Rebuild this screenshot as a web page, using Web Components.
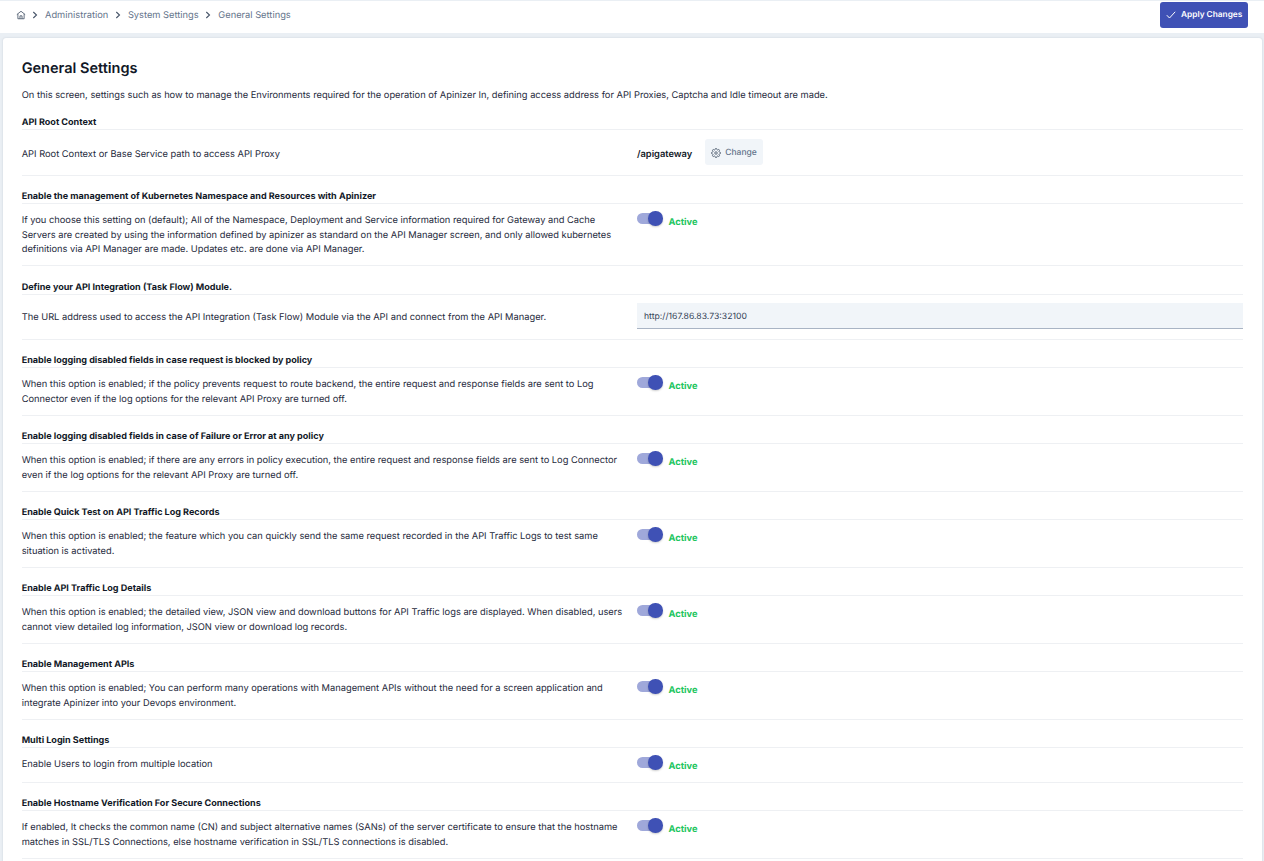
<!DOCTYPE html>
<html lang="en">
<head>
<meta charset="utf-8">
<title>General Settings</title>
<style>
  html, body { margin: 0; height: 861px; overflow: hidden; background: #eaeff4; }
  body { font-family: Inter, "Liberation Sans", sans-serif; color: #1e293b; font-size: 9.31px; text-rendering: geometricPrecision; }
</style>
</head>
<body>
<top-bar>
  <span>Administration</span>
  <span>System Settings</span>
  <span>General Settings</span>
</top-bar>
<settings-card heading="General Settings" intro="On this screen, settings such as how to manage the Environments required for the operation of Apinizer In, defining access address for API Proxies, Captcha and Idle timeout are made.">
  <setting-row heading="API Root Context" center style="--text-shift: 4px">
    API Root Context or Base Service path to access API Proxy
    <root-context slot="control" value="/apigateway"></root-context>
  </setting-row>
  <setting-row heading="Enable the management of Kubernetes Namespace and Resources with Apinizer">
    If you choose this setting on (default); All of the Namespace, Deployment and Service information required for Gateway and Cache Servers are created by using the information defined by apinizer as standard on the API Manager screen, and only allowed kubernetes definitions via API Manager are made. Updates etc. are done via API Manager.
    <active-toggle slot="control"></active-toggle>
  </setting-row>
  <setting-row heading="Define your API Integration (Task Flow) Module." center style="--text-shift: 1px">
    The URL address used to access the API Integration (Task Flow) Module via the API and connect from the API Manager.
    <url-field slot="control" value="http://167.86.83.73:32100"></url-field>
  </setting-row>
  <setting-row heading="Enable logging disabled fields in case request is blocked by policy">
    When this option is enabled; if the policy prevents request to route backend, the entire request and response fields are sent to Log Connector even if the log options for the relevant API Proxy are turned off.
    <active-toggle slot="control"></active-toggle>
  </setting-row>
  <setting-row heading="Enable logging disabled fields in case of Failure or Error at any policy">
    When this option is enabled; if there are any errors in policy execution, the entire request and response fields are sent to Log Connector even if the log options for the relevant API Proxy are turned off.
    <active-toggle slot="control"></active-toggle>
  </setting-row>
  <setting-row heading="Enable Quick Test on API Traffic Log Records">
    When this option is enabled; the feature which you can quickly send the same request recorded in the API Traffic Logs to test same situation is activated.
    <active-toggle slot="control"></active-toggle>
  </setting-row>
  <setting-row heading="Enable API Traffic Log Details">
    When this option is enabled; the detailed view, JSON view and download buttons for API Traffic logs are displayed. When disabled, users cannot view detailed log information, JSON view or download log records.
    <active-toggle slot="control"></active-toggle>
  </setting-row>
  <setting-row heading="Enable Management APIs">
    When this option is enabled; You can perform many operations with Management APIs without the need for a screen application and integrate Apinizer into your Devops environment.
    <active-toggle slot="control"></active-toggle>
  </setting-row>
  <setting-row heading="Multi Login Settings">
    Enable Users to login from multiple location
    <active-toggle slot="control"></active-toggle>
  </setting-row>
  <setting-row heading="Enable Hostname Verification For Secure Connections">
    If enabled, It checks the common name (CN) and subject alternative names (SANs) of the server certificate to ensure that the hostname matches in SSL/TLS Connections, else hostname verification in SSL/TLS connections is disabled.
    <active-toggle slot="control"></active-toggle>
  </setting-row>
</settings-card>
<script>
class TopBar extends HTMLElement {
    constructor() {
        super();
        this.attachShadow({ mode: 'open' });
        const chevron = `<svg class="chev" width="8" height="8" viewBox="0 0 8 8" fill="none" stroke="#475569" stroke-width="1.1"><path d="M2.3 1 5.5 4 2.3 7"/></svg>`;
        const crumbs = [...this.children].map(c => `${chevron}<a>${c.textContent}</a>`).join('');
        this.shadowRoot.innerHTML = `
            <style>
                :host {
                    display: flex;
                    align-items: center;
                    justify-content: space-between;
                    height: 32px;
                    margin-top: 1px;
                    padding: 0 16px 0 16px;
                    background: #fff;
                }
                nav {
                    display: flex;
                    align-items: center;
                    color: #64748b;
                    font-size: 9.31px;
                    margin-top: -4px;
                }
                .home { margin-right: 5px; }
                .chev { margin-right: 6px; }
                a { margin-right: 5.6px; }
                button {
                    display: flex;
                    align-items: center;
                    gap: 5px;
                    height: 26px;
                    width: 88px;
                    margin-top: -5px;
                    padding: 1px 0 0 6px;
                    box-sizing: border-box;
                    border: none;
                    border-radius: 3px;
                    background: #3f51b5;
                    color: #fff;
                    font: 600 8.3px Inter, sans-serif;
                    text-rendering: geometricPrecision;
                }
            </style>
            <nav>
                <svg class="home" width="10" height="10" viewBox="0 0 24 24" fill="none" stroke="#475569" stroke-width="2"><path d="M2 11 12 3l10 8M4.5 9.5V21h15V9.5M9.5 21v-7h5v7"/></svg>
                ${crumbs}
            </nav>
            <button><svg width="10" height="8" viewBox="0 0 10 8" fill="none" stroke="#fff" stroke-width="1"><path d="M.8 4.2 3.5 7 9.2.8"/></svg>Apply Changes</button>
        `;
    }
}

class SettingsCard extends HTMLElement {
    connectedCallback() {
        this.attachShadow({ mode: 'open' });
        this.shadowRoot.innerHTML = `
            <style>
                :host {
                    display: block;
                    margin: 5px 2.5px 0 3px;
                    padding: 22px 18.5px 0 18.7px;
                    height: 900px;
                    background: #fff;
                    border-radius: 3px;
                    box-shadow: 0 0 2px rgba(100, 116, 139, 0.25);
                }
                h1 {
                    margin: 0;
                    font-size: 14.5px;
                    line-height: 18px;
                    font-weight: 600;
                    color: #111827;
                }
                p {
                    margin: 11px 0 13px;
                    line-height: 14.5px;
                    color: #1e293b;
                }
            </style>
            <h1>${this.getAttribute('heading')}</h1>
            <p>${this.getAttribute('intro')}</p>
            <slot></slot>
        `;
    }
}

class SettingRow extends HTMLElement {
    connectedCallback() {
        this.attachShadow({ mode: 'open' });
        this.shadowRoot.innerHTML = `
            <style>
                :host {
                    display: block;
                    border-bottom: 1px solid #eef0f3;
                }
                h2 {
                    margin: 0;
                    padding: 15.5px 0 0;
                    font-size: 9.05px;
                    line-height: 12px;
                    font-weight: 700;
                    color: #111827;
                    border-bottom: 1px solid #eef0f3;
                }
                :host(:first-of-type) h2 { padding-top: 0; }
                .body {
                    display: grid;
                    grid-template-columns: 605px 1fr;
                    column-gap: 10.3px;
                    padding: 10px 0 7.5px;
                }
                :host([center]) .body { align-items: center; }
                .text {
                    line-height: 14.5px;
                    padding-top: var(--text-shift, 0);
                    color: #1e293b;
                }
            </style>
            <h2>${this.getAttribute('heading')}</h2>
            <div class="body">
                <div class="text"><slot></slot></div>
                <div><slot name="control"></slot></div>
            </div>
        `;
    }
}

class ActiveToggle extends HTMLElement {
    constructor() {
        super();
        this.attachShadow({ mode: 'open' });
        this.shadowRoot.innerHTML = `
            <style>
                :host {
                    display: flex;
                    align-items: flex-start;
                    gap: 7.5px;
                    height: 16px;
                }
                .track {
                    position: relative;
                    width: 24px;
                    height: 11px;
                    border-radius: 6px;
                    background: #9fa8da;
                    margin-top: -1px;
                }
                .knob {
                    position: absolute;
                    right: -2px;
                    top: -1.75px;
                    width: 14.5px;
                    height: 14.5px;
                    border-radius: 50%;
                    background: #3f51b5;
                    box-shadow: 0 1px 2px rgba(0, 0, 0, 0.2);
                }
                span {
                    font-weight: 700;
                    color: #22c55e;
                    line-height: 12px;
                    margin-top: 2.5px;
                }
            </style>
            <div class="track"><div class="knob"></div></div>
            <span>Active</span>
        `;
    }
}

class RootContext extends HTMLElement {
    connectedCallback() {
        this.attachShadow({ mode: 'open' });
        this.shadowRoot.innerHTML = `
            <style>
                :host {
                    display: flex;
                    align-items: flex-start;
                    gap: 13px;
                    height: 27.5px;
                }
                b {
                    font-weight: 600;
                    color: #111827;
                    line-height: 14px;
                    margin-top: 8.5px;
                }
                button {
                    display: flex;
                    align-items: center;
                    gap: 4px;
                    width: 58px;
                    height: 26px;
                    margin-top: -0.5px;
                    padding: 1px 0 0 6px;
                    box-sizing: border-box;
                    border: none;
                    border-radius: 3px;
                    background: #f1f5f9;
                    color: #64748b;
                    font: 500 8.5px Inter, sans-serif;
                    text-rendering: geometricPrecision;
                }
            </style>
            <b>${this.getAttribute('value')}</b>
            <button>
                <svg width="10" height="10" viewBox="0 0 24 24" fill="none" stroke="#475569" stroke-width="2"><circle cx="12" cy="12" r="3"/><path d="M19.4 15a1.65 1.65 0 0 0 .33 1.82l.06.06a2 2 0 1 1-2.83 2.83l-.06-.06a1.65 1.65 0 0 0-2.82 1.17V21a2 2 0 0 1-4 0v-.09A1.65 1.65 0 0 0 9 19.4a1.65 1.65 0 0 0-1.82.33l-.06.06a2 2 0 1 1-2.83-2.83l.06-.06a1.65 1.65 0 0 0-1.17-2.82H3a2 2 0 0 1 0-4h.09A1.65 1.65 0 0 0 4.6 9a1.65 1.65 0 0 0-.33-1.82l-.06-.06a2 2 0 1 1 2.83-2.83l.06.06a1.65 1.65 0 0 0 1.82.33H9a1.65 1.65 0 0 0 1-1.51V3a2 2 0 0 1 4 0v.09a1.65 1.65 0 0 0 2.82 1.17l.06-.06a2 2 0 1 1 2.83 2.83l-.06.06a1.65 1.65 0 0 0-.33 1.82V9a1.65 1.65 0 0 0 1.51 1H21a2 2 0 0 1 0 4h-.09a1.65 1.65 0 0 0-1.51 1z"/></svg>
                Change
            </button>
        `;
    }
}

class UrlField extends HTMLElement {
    connectedCallback() {
        this.attachShadow({ mode: 'open' });
        this.shadowRoot.innerHTML = `
            <style>
                :host { display: flex; flex-direction: column; height: 26.5px; }
                div {
                    height: 25.5px;
                    margin-top: -2px;
                    padding: 0 7px;
                    line-height: 29px;
                    background: #f1f5f9;
                    border-bottom: 1px solid #a9b4c4;
                    font-size: 8.67px;
                    color: #334155;
                    overflow: hidden;
                }
            </style>
            <div>${this.getAttribute('value')}</div>
        `;
    }
}

customElements.define('top-bar', TopBar);
customElements.define('settings-card', SettingsCard);
customElements.define('setting-row', SettingRow);
customElements.define('active-toggle', ActiveToggle);
customElements.define('root-context', RootContext);
customElements.define('url-field', UrlField);
</script>
</body>
</html>
